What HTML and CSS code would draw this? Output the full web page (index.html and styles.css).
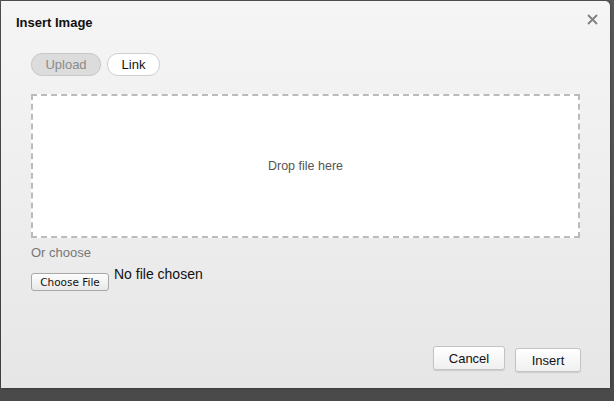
FILE: index.html
```html
<!DOCTYPE html>
<html>
<head>
<meta charset="utf-8">
<link rel="stylesheet" href="styles.css">
</head>
<body>
<div class="dialog">
  <div class="header">
    <h1 class="title">Insert Image</h1>
    <button class="close" aria-label="Close">
      <svg width="11" height="11" viewBox="0 0 11 11"><path d="M1 1 L10 10 M10 1 L1 10" stroke="#808080" stroke-width="1.8" fill="none"/></svg>
    </button>
  </div>
  <div class="tabs">
    <button class="tab tab-active">Upload</button>
    <button class="tab">Link</button>
  </div>
  <div class="dropzone">Drop file here</div>
  <div class="or">Or choose</div>
  <div class="file-row">
    <button class="file-btn">Choose File</button>
    <span class="file-status">No file chosen</span>
  </div>
  <div class="footer">
    <button class="btn btn-cancel">Cancel</button>
    <button class="btn btn-insert">Insert</button>
  </div>
</div>
</body>
</html>
```

FILE: styles.css
```css
html, body {
  margin: 0;
  padding: 0;
  height: 100%;
}
body {
  background: linear-gradient(to bottom, #5a5a5a, #4a4a4a);
  font-family: "Liberation Sans", Arial, sans-serif;
  padding: 1px 4px 0 1px;
  box-sizing: border-box;
  width: 614px;
  height: 401px;
}
.dialog {
  width: 609px;
  height: 387px;
  box-sizing: border-box;
  background: linear-gradient(to bottom, #f5f5f5 0%, #eeeeee 50%, #e6e6e6 100%);
  border-radius: 0 5px 0 0;
  padding: 0 0 0 30px;
  display: flex;
  flex-direction: column;
  box-shadow: 0 0 3px rgba(0,0,0,0.4);
}
.header {
  display: flex;
  justify-content: space-between;
  align-items: flex-start;
  margin-left: -15px;
  padding-top: 14px;
  padding-right: 12px;
}
.title {
  margin: 0;
  font-size: 13px;
  line-height: 16px;
  font-weight: bold;
  color: #111;
}
.close {
  border: 0;
  background: none;
  padding: 0;
  margin-top: -1px;
  width: 11px;
  height: 11px;
  display: flex;
}
.tabs {
  display: flex;
  gap: 6px;
  margin-top: 22px;
}
.tab {
  height: 23px;
  box-sizing: border-box;
  border: 1px solid #cfcfcf;
  border-radius: 11px;
  background: #fff;
  font-family: "Liberation Sans", Arial, sans-serif;
  font-size: 13px;
  color: #111;
  padding: 0 13px;
  width: 53px;
}
.tab-active {
  width: 70px;
  background: #dcdcdc;
  color: #8a8a8a;
  border-color: #c8c8c8;
}
.dropzone {
  margin-top: 18px;
  width: 549px;
  height: 144px;
  box-sizing: border-box;
  border: 2px dashed #bbbbbb;
  background: #fff;
  display: flex;
  align-items: center;
  justify-content: center;
  font-size: 12.5px;
  color: #555;
}
.or {
  margin-top: 7px;
  font-size: 13px;
  color: #777;
  line-height: 16px;
}
.file-row {
  display: flex;
  align-items: flex-start;
  margin-top: 5px;
}
.file-btn {
  margin-top: 7px;
  width: 78px;
  height: 18px;
  box-sizing: border-box;
  border: 1px solid #a8a8a8;
  border-radius: 3px;
  background: linear-gradient(to bottom, #fdfdfd, #e8e8e8);
  font-family: "DejaVu Sans", sans-serif;
  font-size: 10.5px;
  color: #111;
  padding: 0;
}
.file-status {
  margin-left: 5px;
  font-size: 14px;
  line-height: 16px;
  color: #111;
}
.footer {
  margin-top: auto;
  margin-bottom: 16px;
  display: flex;
  justify-content: flex-end;
  gap: 10px;
  padding-right: 29px;
  align-items: flex-start;
}
.btn {
  height: 24px;
  box-sizing: border-box;
  border: 1px solid #c4c4c4;
  border-radius: 3px;
  background: linear-gradient(to bottom, #ffffff, #f0f0f0);
  box-shadow: 0 1px 1px rgba(0,0,0,0.12);
  font-family: "Liberation Sans", Arial, sans-serif;
  font-size: 13px;
  color: #111;
  padding: 0;
}
.btn-cancel {
  width: 72px;
}
.btn-insert {
  width: 66px;
  margin-top: 2px;
}
```
